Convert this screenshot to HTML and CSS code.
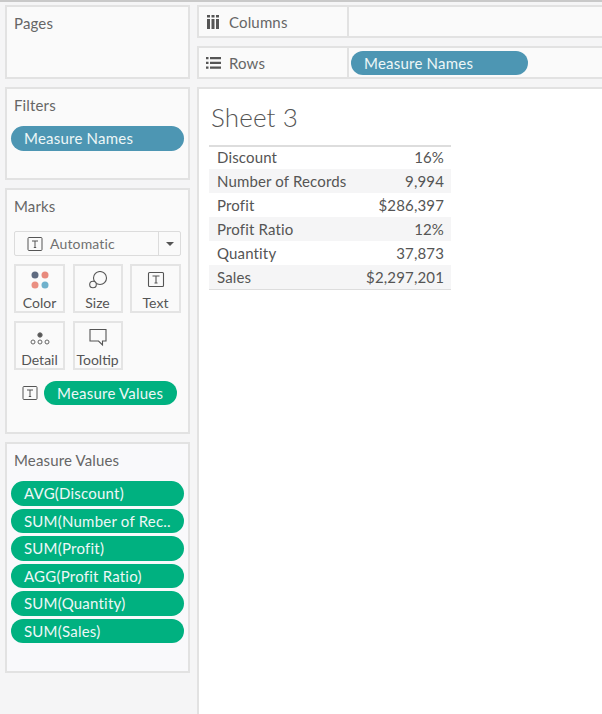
FILE: index.html
```html
<!DOCTYPE html>
<html lang="en">
<head>
<meta charset="utf-8">
<title>Sheet 3</title>
<link rel="stylesheet" href="styles.css">
</head>
<body>
<div class="app">
  <aside class="side">
    <section class="panel pages"><h2 class="panel-title">Pages</h2></section>
    <section class="panel filters">
      <h2 class="panel-title">Filters</h2>
      <div class="pill blue">Measure Names</div>
    </section>
    <section class="panel marks">
      <h2 class="panel-title">Marks</h2>
      <div class="dropdown">
        <div class="dropdown-main">
          <svg class="t-icon" viewBox="0 0 16 16"><rect x="1" y="1.5" width="14" height="13" rx="1"/><path d="M5 5h6M8 5v6.5M6.8 11.5h2.4"/></svg>
          <span>Automatic</span>
        </div>
        <div class="dropdown-arrow"><span class="caret"></span></div>
      </div>
      <div class="cards">
        <div class="card">
          <svg class="card-icon" viewBox="0 0 22 20"><circle cx="6" cy="4" r="3.5" fill="#5f6b80"/><circle cx="16" cy="4" r="3.5" fill="#e88a7d"/><circle cx="6" cy="14" r="3.5" fill="#ea8f82"/><circle cx="16" cy="14" r="3.5" fill="#6fb1cc"/></svg>
          <span>Color</span>
        </div>
        <div class="card">
          <svg class="card-icon line" viewBox="0 0 22 20"><circle cx="13" cy="7" r="6.5"/><circle cx="6" cy="13.500" r="3.300" fill="#fafafa"/></svg>
          <span>Size</span>
        </div>
        <div class="card">
          <svg class="card-icon line" viewBox="0 0 22 20"><rect x="3.5" y="1.5" width="15" height="14" rx="1"/><path d="M7.5 5h7M11 5v7M9.500 12h3"/></svg>
          <span>Text</span>
        </div>
        <div class="card">
          <svg class="card-icon detail" viewBox="0 0 22 20"><circle cx="11" cy="7" r="2.200" fill="#555"/><circle cx="4" cy="14" r="2"/><circle cx="11" cy="14" r="2"/><circle cx="18" cy="14" r="2"/></svg>
          <span>Detail</span>
        </div>
        <div class="card">
          <svg class="card-icon line" viewBox="0 0 22 20"><path d="M3 1.500h16v11.500h-3.500v4l-4-4H3z"/></svg>
          <span>Tooltip</span>
        </div>
      </div>
      <div class="marks-field">
        <svg class="t-icon" viewBox="0 0 16 16"><rect x="1" y="1.5" width="14" height="13" rx="1"/><path d="M5 5h6M8 5v6.500M6.800 11.500h2.400"/></svg>
        <div class="pill green">Measure Values</div>
      </div>
    </section>
    <section class="panel values">
      <h2 class="panel-title">Measure Values</h2>
      <div class="pill-list">
        <div class="pill green">AVG(Discount)</div>
        <div class="pill green">SUM(Number of Rec..</div>
        <div class="pill green">SUM(Profit)</div>
        <div class="pill green">AGG(Profit Ratio)</div>
        <div class="pill green">SUM(Quantity)</div>
        <div class="pill green">SUM(Sales)</div>
      </div>
    </section>
  </aside>
  <main class="main">
    <div class="shelf">
      <div class="shelf-label">
        <svg class="shelf-icon" viewBox="0 0 14 14"><path d="M0 4h3v10H0zM4.500 4h3v10h-3zM9 4h3v10H9zM0 0h3v2.500H0zM4.500 0h3v2.500h-3zM9 0h3v2.500H9z"/></svg>
        <span>Columns</span>
      </div>
      <div class="shelf-body"></div>
    </div>
    <div class="shelf">
      <div class="shelf-label">
        <svg class="shelf-icon" viewBox="0 0 14 14"><path d="M-1 1h2.500v2.200H-1zM3 1h11v2.200H3zM-1 5.800h2.500V8H-1zM3 5.800h11V8H3zM-1 10.600h2.500v2.200H-1zM3 10.600h11v2.200H3z"/></svg>
        <span>Rows</span>
      </div>
      <div class="shelf-body"><div class="pill blue shelf-pill">Measure Names</div></div>
    </div>
    <div class="sheet">
      <h1 class="sheet-title">Sheet 3</h1>
      <div class="table">
        <div class="row"><span>Discount</span><span>16%</span></div>
        <div class="row"><span>Number of Records</span><span>9,994</span></div>
        <div class="row"><span>Profit</span><span>$286,397</span></div>
        <div class="row"><span>Profit Ratio</span><span>12%</span></div>
        <div class="row"><span>Quantity</span><span>37,873</span></div>
        <div class="row"><span>Sales</span><span>$2,297,201</span></div>
      </div>
    </div>
  </main>
</div>
</body>
</html>
```

FILE: styles.css
```css
* { box-sizing: border-box; }
html, body { margin: 0; height: 100%; }
body {
  overflow: hidden;
  background: #f5f5f6;
  color: #555;
  font-family: Lato, "Open Sans", sans-serif;
  font-size: 15px;
  letter-spacing: 0.15px;
}
.app {
  display: flex;
  gap: 7px;
  height: 714px;
  padding: 5px 0 0 5px;
  border-top: 2px solid #c9c9c9;
}
.side {
  display: flex;
  flex-direction: column;
  gap: 8px;
  width: 185px;
  margin-top: -2px;
}
.panel {
  border: 2px solid #e2e2e2;
  background: #fafafa;
  padding: 6px 5px 0 7px;
}
.panel-title {
  margin: 0;
  font-size: 15px;
  font-weight: 400;
  line-height: 20px;
  color: #666;
}
.pages { height: 74px; }
.filters { height: 93px; }
.marks { height: 246px; }
.values { height: 231px; background: #f9f9fb; }
.pill {
  display: flex;
  align-items: center;
  height: 24.500px;
  border-radius: 13px;
  padding-left: 13px;
  color: #eef7f7;
  font-size: 15px;
  letter-spacing: 0.22px;
  white-space: nowrap;
}
.blue { background: #4d96b3; }
.green { background: #00b180; }
.filters .pill { margin: 11px 0 0 -3px; width: 173px; }
.dropdown {
  display: flex;
  height: 25px;
  margin-top: 15px;
  width: 167px;
  border: 1px solid #dcdcdc;
  border-radius: 2px;
  background: #fafafa;
  font-size: 14px;
  color: #707070;
}
.dropdown-main {
  flex: 1;
  display: flex;
  align-items: center;
  gap: 7px;
  padding-left: 12px;
  border-right: 1px solid #dcdcdc;
}
.dropdown-arrow {
  width: 21px;
  display: flex;
  align-items: center;
  justify-content: center;
}
.caret {
  width: 0;
  height: 0;
  border-left: 4px solid transparent;
  border-right: 4px solid transparent;
  border-top: 4px solid #555;
}
.t-icon {
  width: 16px;
  height: 16px;
  flex: none;
  fill: none;
  stroke: #555;
  stroke-width: 1;
}
.cards {
  display: grid;
  grid-template-columns: 51px 50px 51px;
  column-gap: 7.500px;
  row-gap: 8px;
  margin-top: 8px;
}
.card {
  height: 49px;
  border: 2px solid #e4e4e4;
  background: #fafafa;
  display: flex;
  flex-direction: column;
  align-items: center;
  justify-content: flex-start;
  padding-top: 5px;
  font-size: 14px;
  letter-spacing: 0;
  line-height: 16px;
  color: #555;
}
.card-icon { width: 22px; height: 20px; flex: none; margin-bottom: 4px; }
.card-icon.line { fill: none; stroke: #555; stroke-width: 1.100; }
.card-icon.detail { fill: none; stroke: #666; stroke-width: 1; }
.marks-field {
  display: flex;
  align-items: center;
  gap: 6px;
  margin: 11px 0 0 8px;
}
.marks-field .pill { width: 133px; height: 24px; }
.pill-list {
  display: flex;
  flex-direction: column;
  gap: 3px;
  margin: 11px 0 0 -3px;
  width: 173px;
}
.main {
  flex: 1;
  min-width: 0;
  display: flex;
  flex-direction: column;
  gap: 8px;
  margin-top: -2px;
}
.shelf {
  display: flex;
  height: 33px;
  border-top: 2px solid #e2e2e2;
  border-bottom: 2px solid #e2e2e2;
  border-left: 2px solid #e2e2e2;
  background: #fafafa;
}
.shelf-label {
  width: 150px;
  flex: none;
  display: flex;
  align-items: center;
  gap: 8px;
  padding-left: 8px;
  border-right: 2px solid #e2e2e2;
  color: #666;
}
.shelf-icon { width: 14px; height: 14px; fill: #555; flex: none; overflow: visible; }
.shelf-body { flex: 1; display: flex; align-items: center; padding-left: 2px; }
.shelf-pill { width: 177px; height: 24px; }
.sheet {
  flex: 1;
  background: #fff;
  border-top: 2px solid #e2e2e2;
  border-left: 2px solid #e2e2e2;
  padding: 0 0 0 10px;
}
.sheet-title {
  margin: 0;
  padding: 13px 0 0 2px;
  height: 56px;
  font-size: 26px;
  line-height: 30px;
  font-weight: 300;
  color: #555;
}
.table {
  width: 242px;
  border-top: 2px solid #ddd;
  border-bottom: 1px solid #ddd;
}
.row {
  display: flex;
  justify-content: space-between;
  height: 24px;
  align-items: center;
  padding: 0 7px 0 8px;
  font-size: 15px;
  color: #555;
}
.row:first-child { height: 22px; padding-bottom: 2px; }
.row:nth-child(even) { background: #f5f5f6; }
```
